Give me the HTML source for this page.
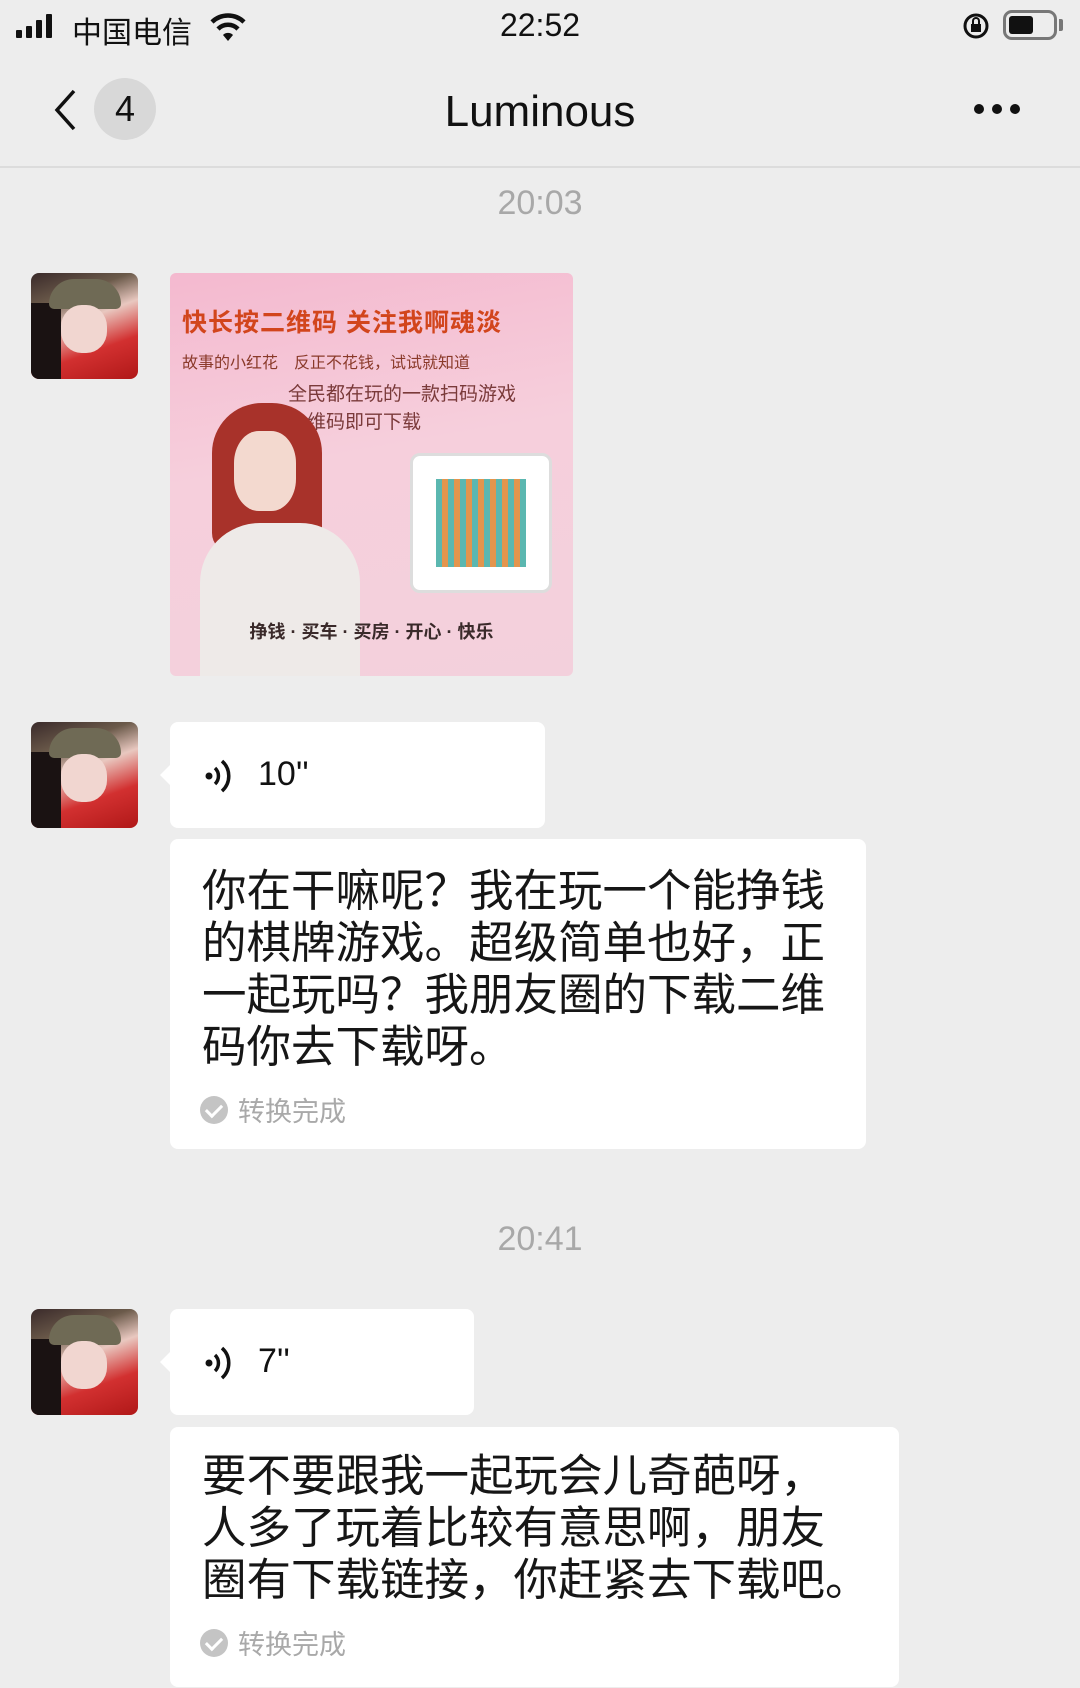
<!DOCTYPE html>
<html><head><meta charset="utf-8"><style>
*{margin:0;padding:0;box-sizing:border-box}
body{width:1080px;height:1688px;background:#ededed;font-family:"Liberation Sans","Noto Sans CJK SC",sans-serif;position:relative;overflow:hidden;color:#111}
.abs{position:absolute}
.av{position:absolute;left:31px;width:107px;height:106px;border-radius:8px;overflow:hidden;background:linear-gradient(160deg,#3a2a2a 0%,#6b5a4a 25%,#e9c8c0 45%,#d23030 70%,#b01818 100%)}
.av .cap{position:absolute;left:18px;top:6px;width:72px;height:30px;border-radius:30px 30px 6px 6px;background:#6f6a55}
.av .face{position:absolute;left:30px;top:32px;width:46px;height:48px;border-radius:45%;background:#f1d6d0}
.av .hair{position:absolute;left:0;top:30px;width:30px;height:76px;background:#1a1212}
.bub{position:absolute;background:#fff;border-radius:8px}
.tail{position:absolute;left:-10px;width:0;height:0;border-top:10px solid transparent;border-bottom:10px solid transparent;border-right:10px solid #fff}
.time{position:absolute;width:1080px;text-align:center;font-size:34px;color:#a8a8a8}
.msg{position:absolute;left:32px;font-size:44.5px;line-height:52px;color:#161616;white-space:nowrap}
.done{position:absolute;left:30px;font-size:27px;color:#a9a9a9;display:flex;align-items:center}
.done i{display:inline-block;width:28px;height:28px;border-radius:50%;background:#c4c4c4;margin-right:10px;position:relative}
.done i:after{content:"";position:absolute;left:9px;top:5px;width:7px;height:13px;border:solid #fff;border-width:0 3px 3px 0;transform:rotate(45deg)}
</style></head><body>
<div class="abs" style="left:16px;top:14px;display:flex;align-items:flex-end;gap:4px;height:24px">
<div style="width:6px;height:8px;background:#111;border-radius:1px"></div>
<div style="width:6px;height:12px;background:#111;border-radius:1px"></div>
<div style="width:6px;height:18px;background:#111;border-radius:1px"></div>
<div style="width:6px;height:24px;background:#111;border-radius:1px"></div>
</div>
<div class="abs" style="left:72px;top:8px;font-size:30px;color:#111">中国电信</div>
<svg class="abs" style="left:210px;top:12px" width="36" height="30" viewBox="0 0 36 30"><path d="M2 10a23 23 0 0 1 32 0" stroke="#111" stroke-width="4.5" fill="none"/><path d="M8 17a14 14 0 0 1 20 0" stroke="#111" stroke-width="4.5" fill="none"/><path d="M13 23l5 6 5-6a7 7 0 0 0-10 0z" fill="#111"/></svg>
<div class="abs" style="left:0;width:1080px;text-align:center;top:7px;font-size:32px;color:#111">22:52</div>
<svg class="abs" style="left:962px;top:12px" width="28" height="28" viewBox="0 0 28 28"><circle cx="14" cy="14" r="11" stroke="#111" stroke-width="3" fill="none"/><rect x="9" y="12" width="10" height="8" fill="#111"/><path d="M11 12v-3a3 3 0 0 1 6 0v3" stroke="#111" stroke-width="2" fill="none"/></svg>
<div class="abs" style="left:1003px;top:10px;width:54px;height:30px;border:3px solid #777;border-radius:9px"><div style="position:absolute;left:3px;top:3px;width:24px;height:18px;background:#111;border-radius:3px"></div></div>
<div class="abs" style="left:1059px;top:19px;width:4px;height:12px;background:#777;border-radius:0 2px 2px 0"></div>
<svg class="abs" style="left:52px;top:88px" width="26" height="44" viewBox="0 0 26 44"><path d="M22 3L5 22l17 19" stroke="#111" stroke-width="3.5" fill="none"/></svg>
<div class="abs" style="left:94px;top:78px;width:62px;height:62px;border-radius:50%;background:#d8d8d8;text-align:center;line-height:62px;font-size:36px;color:#111">4</div>
<div class="abs" style="left:0;width:1080px;text-align:center;top:87px;font-size:44px;color:#111">Luminous</div>
<div class="abs" style="left:974px;top:104px;display:flex;gap:8px"><i style="width:10px;height:10px;border-radius:50%;background:#111;display:block"></i><i style="width:10px;height:10px;border-radius:50%;background:#111;display:block"></i><i style="width:10px;height:10px;border-radius:50%;background:#111;display:block"></i></div>
<div class="abs" style="left:0;top:166px;width:1080px;height:2px;background:#dcdcdc"></div>

<div class="time" style="top:184px">20:03</div>
<div class="av" style="top:273px"><div class="hair"></div><div class="cap"></div><div class="face"></div></div>
<div class="abs" style="left:170px;top:273px;width:403px;height:403px;border-radius:6px;overflow:hidden;background:linear-gradient(170deg,#f4b9cf 0%,#f6cfdc 45%,#f3d0dc 100%)">
<div class="abs" style="left:12px;top:30px;font-size:25px;font-weight:bold;color:#d2451c;white-space:nowrap;letter-spacing:1px">快长按二维码 关注我啊魂淡</div>
<div class="abs" style="left:12px;top:76px;font-size:16px;color:#8a3a2a;white-space:nowrap">故事的小红花　反正不花钱，试试就知道</div>
<div class="abs" style="left:118px;top:106px;font-size:19px;color:#7a3a3a;white-space:nowrap">全民都在玩的一款扫码游戏</div>
<div class="abs" style="left:118px;top:134px;font-size:19px;color:#7a3a3a;white-space:nowrap">二维码即可下载</div>
<div class="abs" style="left:42px;top:130px;width:110px;height:150px;border-radius:50px 50px 20px 20px;background:#a8322a"></div>
<div class="abs" style="left:64px;top:158px;width:62px;height:80px;border-radius:40%;background:#f3d9cf"></div>
<div class="abs" style="left:30px;top:250px;width:160px;height:160px;border-radius:60px 60px 0 0;background:#eeeae8"></div>
<div class="abs" style="left:240px;top:180px;width:142px;height:140px;border-radius:10px;background:#fff;border:3px solid #ddd"></div>
<div class="abs" style="left:266px;top:206px;width:90px;height:88px;background:repeating-linear-gradient(90deg,#4ab0a8 0 6px,#e08a3a 6px 12px),#e08a3a;opacity:.9"></div>
<div class="abs" style="left:0;top:345px;width:403px;text-align:center;font-size:18px;font-weight:bold;color:#3a2a2a;white-space:nowrap">挣钱 · 买车 · 买房 · 开心 · 快乐</div>
</div>

<div class="av" style="top:722px"><div class="hair"></div><div class="cap"></div><div class="face"></div></div>
<div class="bub" style="left:170px;top:722px;width:375px;height:106px"><div class="tail" style="top:43px"></div>
<svg class="abs" style="left:34px;top:35px" width="30" height="38" viewBox="0 0 30 38"><circle cx="5" cy="19" r="3.5" fill="#111"/><path d="M11 11a11 11 0 0 1 0 16" stroke="#111" stroke-width="3.5" fill="none"/><path d="M18 4a20 20 0 0 1 0 30" stroke="#111" stroke-width="3.5" fill="none"/></svg>
<div class="abs" style="left:88px;top:33px;font-size:34px">10''</div></div>
<div class="bub" style="left:170px;top:839px;width:696px;height:310px">
<div class="msg" style="top:27px">你在干嘛呢？我在玩一个能挣钱<br>的棋牌游戏。超级简单也好，正<br>一起玩吗？我朋友圈的下载二维<br>码你去下载呀。</div>
<div class="done" style="top:251px"><i></i>转换完成</div></div>

<div class="time" style="top:1220px">20:41</div>
<div class="av" style="top:1309px"><div class="hair"></div><div class="cap"></div><div class="face"></div></div>
<div class="bub" style="left:170px;top:1309px;width:304px;height:106px"><div class="tail" style="top:43px"></div>
<svg class="abs" style="left:34px;top:35px" width="30" height="38" viewBox="0 0 30 38"><circle cx="5" cy="19" r="3.5" fill="#111"/><path d="M11 11a11 11 0 0 1 0 16" stroke="#111" stroke-width="3.5" fill="none"/><path d="M18 4a20 20 0 0 1 0 30" stroke="#111" stroke-width="3.5" fill="none"/></svg>
<div class="abs" style="left:88px;top:33px;font-size:34px">7''</div></div>
<div class="bub" style="left:170px;top:1427px;width:729px;height:260px">
<div class="msg" style="top:24px">要不要跟我一起玩会儿奇葩呀，<br>人多了玩着比较有意思啊，朋友<br>圈有下载链接，你赶紧去下载吧。</div>
<div class="done" style="top:196px"><i></i>转换完成</div></div>
</body></html>
